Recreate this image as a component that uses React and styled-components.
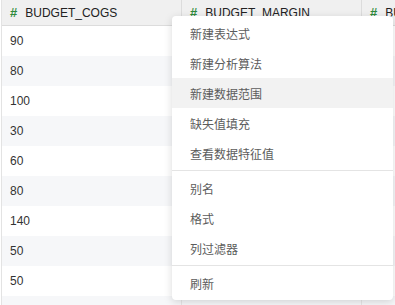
import React from "react";
import styled, { createGlobalStyle } from "styled-components";

const Global = createGlobalStyle`
  html, body { margin: 0; padding: 0; background: #fff; }
  body { font-family: "Liberation Sans", Arial, "Noto Sans CJK SC", sans-serif; overflow: hidden; }
`;

const Page = styled.div`
  position: relative;
  width: 395px;
  height: 305px;
  overflow: hidden;
  padding-left: 1px;
  box-sizing: border-box;
`;

const Table = styled.div`
  display: grid;
  grid-template-columns: 180px 180px 180px;
  border-left: 1px solid #e3e3e3;
`;

const HeaderCell = styled.div`
  height: 26px;
  box-sizing: border-box;
  background: #f0f0f0;
  border-bottom: 1px solid #dcdcdc;
  border-right: 1px solid #dcdcdc;
  display: flex;
  align-items: center;
  padding-left: 8px;
  font-size: 12px;
  color: #222;
  white-space: nowrap;
  overflow: hidden;
`;

const Hash = styled.span`
  color: #2f8a3b;
  font-weight: bold;
  font-size: 13px;
  margin-right: 8px;
`;

const Cell = styled.div`
  height: 30px;
  box-sizing: border-box;
  background: ${(p) => (p.$striped ? "#f6f7f9" : "#fff")};
  border-right: 1px solid #e6e6e6;
  display: flex;
  align-items: center;
  padding-left: 8px;
  font-size: 12px;
  color: #333;
`;

const Menu = styled.div`
  position: absolute;
  left: 172px;
  top: 16px;
  width: 221px;
  background: #fff;
  border-radius: 4px;
  box-shadow: 0 2px 8px rgba(0, 0, 0, 0.15);
  padding: 2px 0;
  box-sizing: border-box;
  display: flex;
  flex-direction: column;
`;

const Item = styled.div`
  height: 30px;
  display: flex;
  align-items: center;
  padding-left: 18px;
  font-family: "Noto Sans CJK SC", "Liberation Sans", sans-serif;
  font-size: 12px;
  color: #5c5c5c;
  background: ${(p) => (p.$active ? "#f2f2f2" : "transparent")};
`;

const Divider = styled.div`
  height: 1px;
  margin: 2px 0;
  background: #e4e4e4;
`;

const columns = ["BUDGET_COGS", "BUDGET_MARGIN", "BUDGET_SALES"];
const col1 = [90, 80, 100, 30, 60, 80, 140, 50, 50, 70];
const col2 = [110, 90, 120, 40, 70, 100, 160, 60, 60, 80];
const col3 = [200, 170, 220, 70, 130, 180, 300, 110, 110, 150];

const groups = [
  ["新建表达式", "新建分析算法", "新建数据范围", "缺失值填充", "查看数据特征值"],
  ["别名", "格式", "列过滤器"],
  ["刷新"],
];

export default function App() {
  return (
    <Page>
      <Global />
      <Table>
        {columns.map((c) => (
          <HeaderCell key={c}>
            <Hash>#</Hash>
            {c}
          </HeaderCell>
        ))}
        {col1.map((v, i) => (
          <React.Fragment key={i}>
            <Cell $striped={i % 2 === 1}>{v}</Cell>
            <Cell $striped={i % 2 === 1}>{col2[i]}</Cell>
            <Cell $striped={i % 2 === 1}>{col3[i]}</Cell>
          </React.Fragment>
        ))}
      </Table>
      <Menu>
        {groups.map((g, gi) => (
          <React.Fragment key={gi}>
            {gi > 0 && <Divider />}
            {g.map((t) => (
              <Item key={t} $active={t === "新建数据范围"}>
                {t}
              </Item>
            ))}
          </React.Fragment>
        ))}
      </Menu>
    </Page>
  );
}
